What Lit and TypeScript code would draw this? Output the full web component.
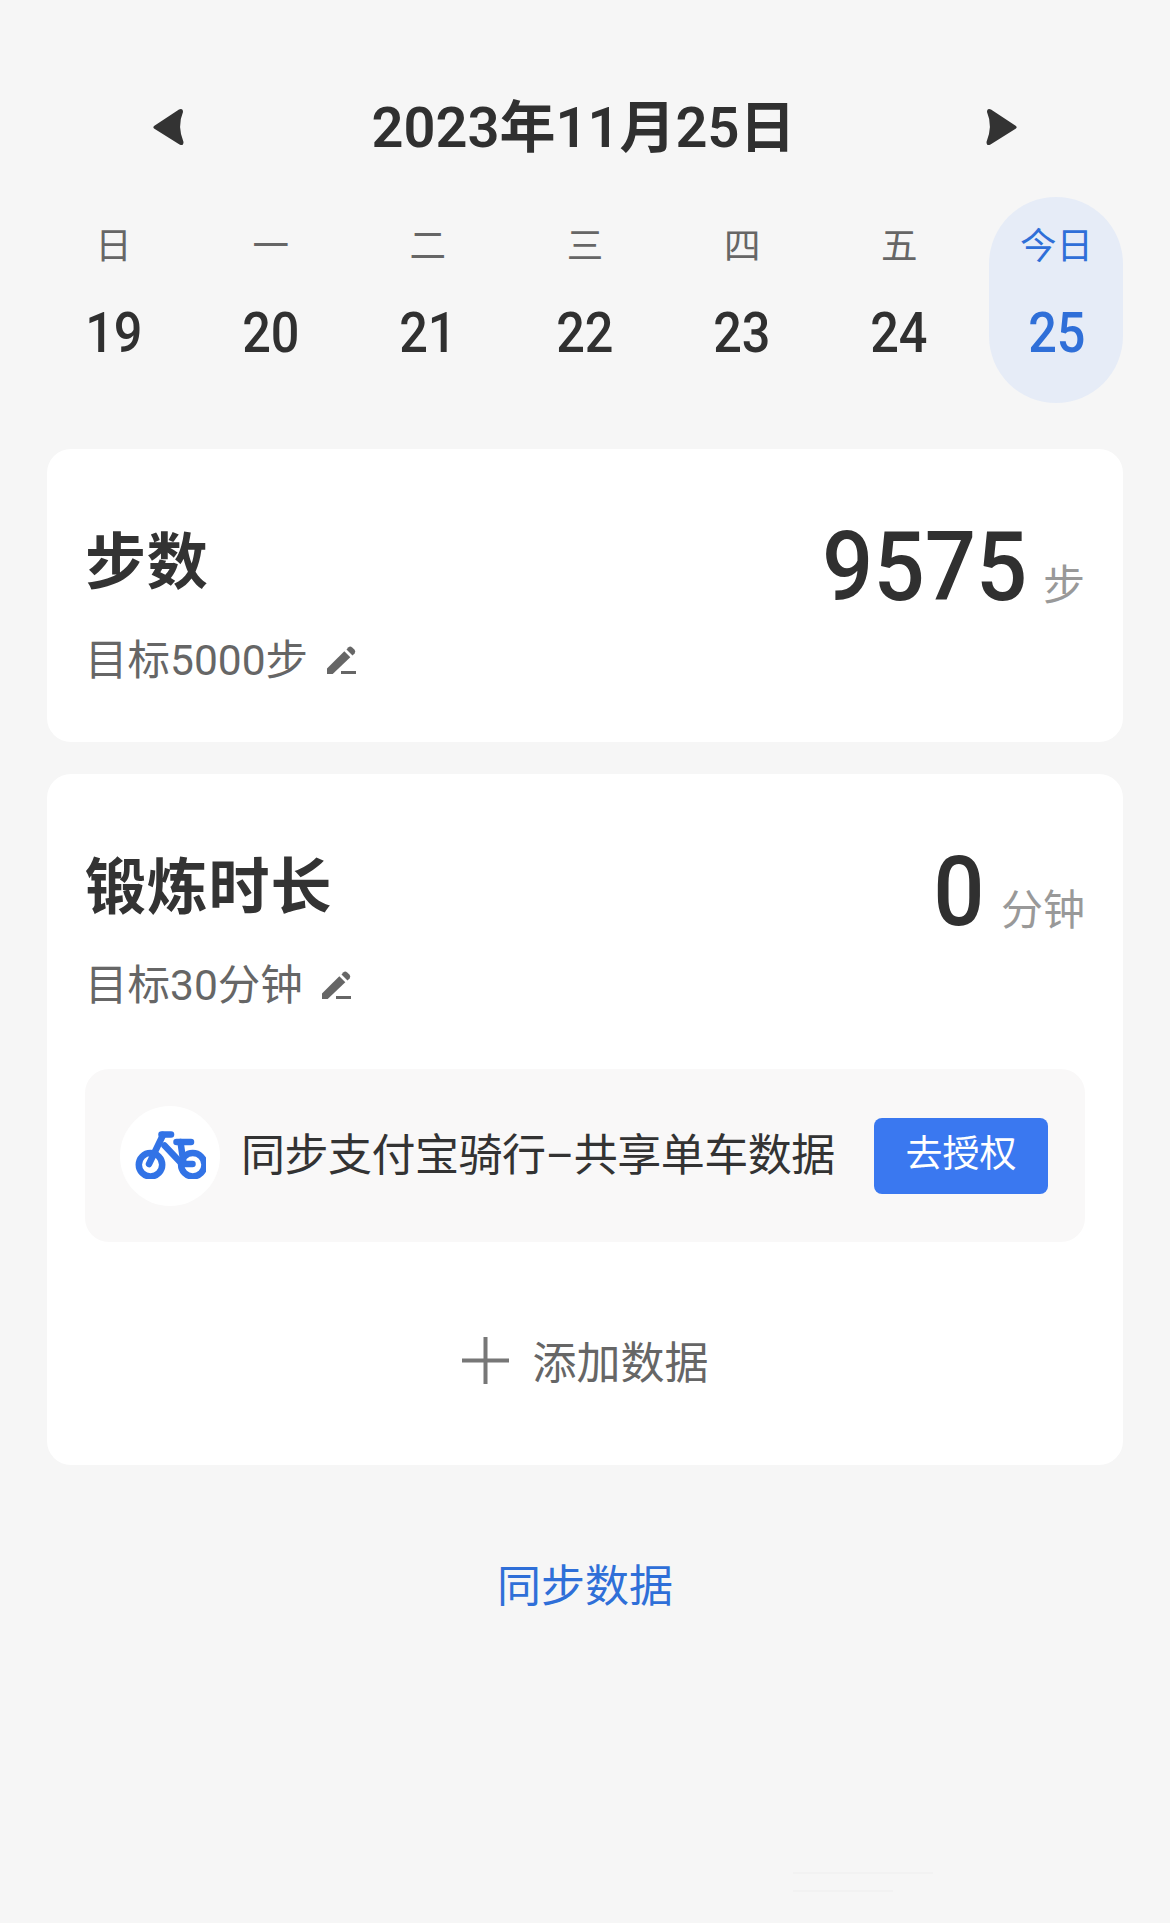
import { LitElement, html, css } from "lit";
import { customElement } from "lit/decorators.js";

const days = [
  ["日", "19"], ["一", "20"], ["二", "21"], ["三", "22"],
  ["四", "23"], ["五", "24"], ["今日", "25"],
];

const pencil = html`<svg class="pencil" viewBox="0 0 32 32">
  <path d="M1 29V23.5L18.3 6.3L24.3 12.3L6.7 29Z" fill="#666"/>
  <path d="M20.5 4.5L22.5 2.2Q24.3 .8 26.2 2.4L28.6 4.8Q30 6.6 28.6 8.4L26.5 10.6Z" fill="#666"/>
  <path d="M15 27.5H30" stroke="#666" stroke-width="3"/>
</svg>`;

@customElement("app-root")
export class AppRoot extends LitElement {
  static styles = css`
    :host {
      display: block;
      position: relative;
      width: 1170px;
      height: 1923px;
      overflow: hidden;
      background: #f6f6f6;
      font-family: Roboto, "Noto Sans CJK SC", "Noto Sans", sans-serif;
      color: #333;
    }
    .head {
      display: flex;
      align-items: center;
      justify-content: space-between;
      height: 60px;
      padding: 98px 152px 0;
    }
    .arrow { width: 33px; height: 40px; display: block; margin-top: -2px; }
    .date {
      font-size: 56px;
      line-height: 60px;
      font-weight: 600;
      margin-right: 3px;
      color: #303030;
    }
    .week {
      display: grid;
      grid-template-columns: repeat(7, 1fr);
      padding: 0 35px;
      margin-top: 39px;
    }
    .day {
      display: flex;
      flex-direction: column;
      align-items: center;
      height: 206px;
      width: 134px;
      justify-self: center;
      border-radius: 67px;
    }
    .day.today { background: #e6ecf7; }
    .label {
      margin-top: 22px;
      font-size: 36.5px;
      line-height: 56px;
      color: #666;
    }
    .num {
      margin-top: 23px;
      font-size: 56px;
      line-height: 70px;
      font-weight: 500;
      color: #303030;
      transform: scaleX(0.9);
    }
    .today .label, .today .num { color: #2f6fd8; }
    .card {
      margin: 32px 47px 0;
      padding: 0 38px;
      background: #fff;
      border-radius: 24px;
    }
    .card.first { margin-top: 46px; height: 293px; }
    .row {
      display: flex;
      justify-content: space-between;
      align-items: flex-start;
      padding-top: 74px;
    }
    .title {
      font-size: 61px;
      line-height: 80px;
      font-weight: 700;
      letter-spacing: 0.8px;
      color: #333;
    }
    .goal {
      display: flex;
      align-items: center;
      margin-top: 28px;
      font-size: 42.5px;
      line-height: 60px;
      color: #666;
      gap: 18px;
    }
    .pencil { width: 32px; height: 32px; display: block; }
    .value {
      display: flex;
      align-items: baseline;
      gap: 16px;
      margin-top: -11px;
    }
    .big {
      font-size: 96px;
      line-height: 110px;
      font-weight: 500;
      color: #303030;
      transform: scaleX(0.94);
      transform-origin: right center;
    }
    .unit { font-size: 42px; line-height: 110px; color: #999; }
    .sync-box {
      display: flex;
      align-items: center;
      height: 173px;
      margin-top: 53px;
      padding: 0 37px 0 35px;
      background: #f9f8f8;
      border-radius: 24px;
    }
    .circle {
      width: 100px;
      height: 100px;
      border-radius: 50%;
      background: #fff;
      display: flex;
      align-items: center;
      justify-content: center;
      flex: none;
    }
    .bike { width: 72px; height: 48px; display: block; margin-top: -2px; }
    .sync-text {
      margin-left: 21px;
      font-size: 44px;
      line-height: 60px;
      color: #333;
      white-space: nowrap;
      letter-spacing: -0.5px;
    }
    .btn {
      margin-left: auto;
      width: 174px;
      height: 76px;
      flex: none;
      border-radius: 8px;
      background: #3a78f0;
      color: #fff;
      font-size: 37px;
      line-height: 50px;
      padding-bottom: 2px;
      box-sizing: border-box;
      display: flex;
      align-items: center;
      justify-content: center;
    }
    .add {
      display: flex;
      align-items: center;
      justify-content: center;
      gap: 24px;
      height: 60px;
      margin-top: 88px;
      padding-bottom: 75px;
      font-size: 44px;
      line-height: 60px;
      color: #666;
    }
    .add span { padding-top: 8px; }
    .plus { width: 47px; height: 47px; display: block; }
    .link {
      margin-top: 92px;
      text-align: center;
      font-size: 44px;
      line-height: 60px;
      color: #2f6fd8;
    }
    .ghost {
      position: absolute;
      left: 793px;
      height: 2px;
      background: #f2f2f2;
    }
    .ghost.one { top: 1872px; width: 140px; }
    .ghost.two { top: 1890px; width: 100px; }
  `;

  render() {
    return html`
      <div class="head">
        <svg class="arrow" viewBox="0 0 33 40">
          <path d="M2 19L27 2.5Q31 1 31 5Q25 19 31.5 35Q31.5 39.500 27.500 37.500L2 21.500Q.5 20 2 19Z" fill="#333"/>
        </svg>
        <div class="date">2023年11月25日</div>
        <svg class="arrow" viewBox="0 0 33 40">
          <path d="M31 19L6 2.500Q2 1 2 5Q8 19 1.500 35Q1.500 39.500 5.500 37.500L31 21.500Q32.500 20 31 19Z" fill="#333"/>
        </svg>
      </div>
      <div class="week">
        ${days.map(([l, n], i) => html`
          <div class="day ${i === 6 ? "today" : ""}">
            <div class="label">${l}</div>
            <div class="num">${n}</div>
          </div>`)}
      </div>
      <div class="card first">
        <div class="row">
          <div>
            <div class="title">步数</div>
            <div class="goal">目标5000步 ${pencil}</div>
          </div>
          <div class="value"><span class="big">9575</span><span class="unit">步</span></div>
        </div>
      </div>
      <div class="card">
        <div class="row">
          <div>
            <div class="title">锻炼时长</div>
            <div class="goal">目标30分钟 ${pencil}</div>
          </div>
          <div class="value"><span class="big">0</span><span class="unit">分钟</span></div>
        </div>
        <div class="sync-box">
          <div class="circle">
            <svg class="bike" viewBox="-1.500 0 72 48" fill="none" stroke="#3273e6" stroke-width="6.500" stroke-linecap="round" stroke-linejoin="round">
              <circle cx="15" cy="33.700" r="11.700"/>
              <circle cx="57.300" cy="33.700" r="11.700"/>
              <path d="M26 3.500H35.500"/>
              <path d="M27.500 4L13.500 33"/>
              <path d="M29 14.500L46.500 33H57"/>
              <path d="M41 11H55.500"/>
              <path d="M45 11L48 32"/>
            </svg>
          </div>
          <div class="sync-text">同步支付宝骑行–共享单车数据</div>
          <div class="btn">去授权</div>
        </div>
        <div class="add">
          <svg class="plus" viewBox="0 0 47 47" stroke="#777" stroke-width="4">
            <path d="M0 23.500H47M23.500 0V47"/>
          </svg>
          <span>添加数据</span>
        </div>
      </div>
      <div class="link">同步数据</div>
      <div class="ghost one"></div>
      <div class="ghost two"></div>
    `;
  }
}
